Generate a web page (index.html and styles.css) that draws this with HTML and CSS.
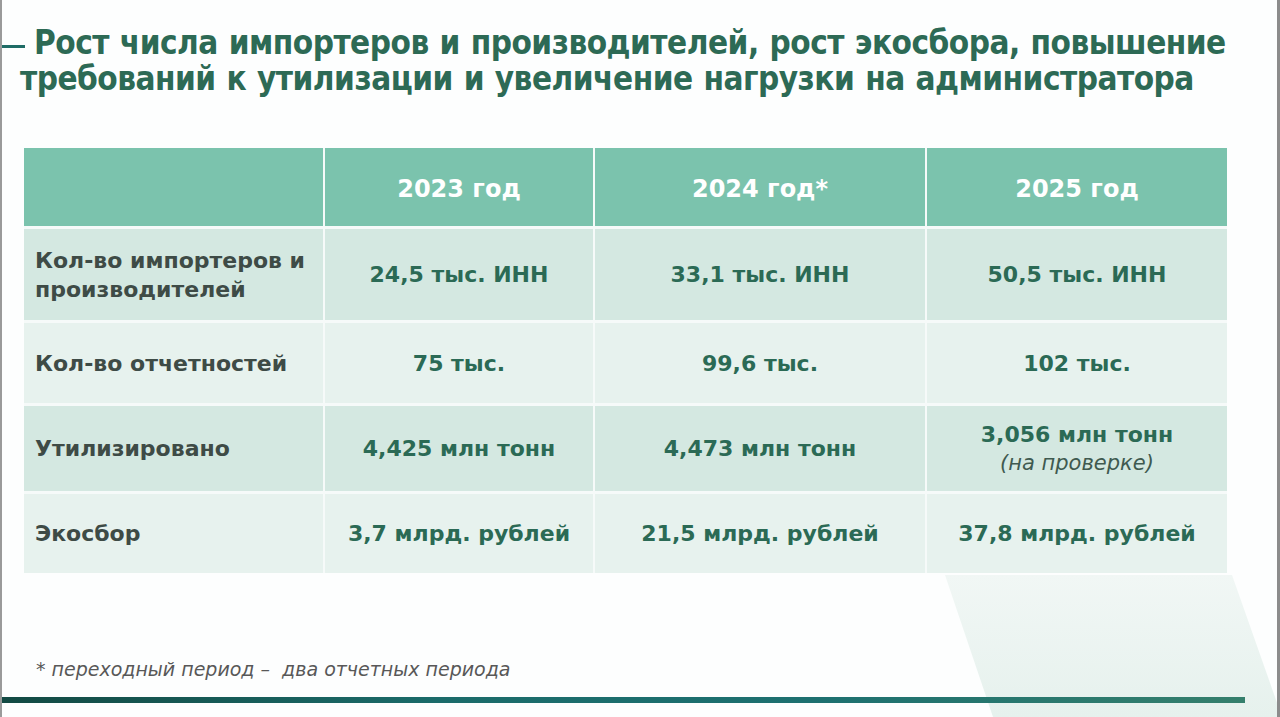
FILE: index.html
```html
<!DOCTYPE html>
<html lang="ru">
<head>
<meta charset="utf-8">
<title>Рост числа импортеров</title>
<link rel="stylesheet" href="styles.css">
</head>
<body>
<div class="slide">
  <svg class="deco" width="340" height="142" viewBox="0 0 340 142" aria-hidden="true">
    <defs>
      <linearGradient id="dg" x1="0" y1="0" x2="0" y2="1">
        <stop offset="0" stop-color="#f1f7f5"/>
        <stop offset="1" stop-color="#e6f1ed"/>
      </linearGradient>
    </defs>
    <polygon points="0,0 287,0 337,142 48,142" fill="url(#dg)"/>
  </svg>
  <h1 class="title">Рост числа импортеров и производителей, рост экосбора, повышение требований к утилизации и увеличение нагрузки на администратора</h1>
  <div class="table">
    <div class="cell head"></div>
    <div class="cell head">2023 год</div>
    <div class="cell head">2024 год*</div>
    <div class="cell head">2025 год</div>

    <div class="cell label odd">Кол-во импортеров и производителей</div>
    <div class="cell val odd">24,5 тыс. ИНН</div>
    <div class="cell val odd">33,1 тыс. ИНН</div>
    <div class="cell val odd">50,5 тыс. ИНН</div>

    <div class="cell label even">Кол-во отчетностей</div>
    <div class="cell val even">75 тыс.</div>
    <div class="cell val even">99,6 тыс.</div>
    <div class="cell val even">102 тыс.</div>

    <div class="cell label odd">Утилизировано</div>
    <div class="cell val odd">4,425 млн тонн</div>
    <div class="cell val odd">4,473 млн тонн</div>
    <div class="cell val odd">3,056 млн тонн<span class="note">(на проверке)</span></div>

    <div class="cell label even">Экосбор</div>
    <div class="cell val even">3,7 млрд. рублей</div>
    <div class="cell val even">21,5 млрд. рублей</div>
    <div class="cell val even">37,8 млрд. рублей</div>
  </div>
  <p class="footnote">* переходный период –&nbsp; два отчетных периода</p>
  <div class="bar"></div>
</div>
</body>
</html>
```

FILE: styles.css
```css
* { box-sizing: border-box; }

html, body {
  margin: 0;
  padding: 0;
  background: #fdfefe;
}

.slide {
  position: relative;
  width: 1280px;
  height: 717px;
  overflow: hidden;
  background: #fdfefe;
  border-left: 2px solid #9a9a9a;
  border-right: 3px solid #8c8c8c;
  font-family: "DejaVu Sans", "Liberation Sans", sans-serif;
  display: flex;
  flex-direction: column;
}

.deco {
  position: absolute;
  left: 943px;
  top: 575px;
}

.title {
  position: relative;
  margin: 25px 0 0 0;
  padding-left: 18px;
  text-indent: 14px;
  font-family: "DejaVu Sans Condensed", "DejaVu Sans", sans-serif;
  font-stretch: condensed;
  font-size: 33px;
  line-height: 36px;
  font-weight: bold;
  letter-spacing: -0.5px;
  word-spacing: 1px;
  color: #2d6a55;
}

.title::before {
  content: "";
  position: absolute;
  left: -2px;
  top: 20px;
  width: 25px;
  height: 3px;
  background: #1f6c66;
}

.table {
  position: relative;
  margin: 51px 0 0 22px;
  width: 1203px;
  display: grid;
  grid-template-columns: 299px 268px 330px 300px;
  grid-template-rows: 78px 91px 80px 85px 79px;
  column-gap: 2px;
  row-gap: 3px;
  background: #f6faf9;
}

.cell {
  display: flex;
  flex-direction: column;
  justify-content: center;
  align-items: center;
  text-align: center;
  font-weight: bold;
}

.head {
  background: #7bc3ad;
  color: #ffffff;
  font-size: 24px;
  padding-top: 4px;
}

.odd { background: #d4e8e1; }
.even { background: #e7f2ee; }

.label {
  align-items: flex-start;
  text-align: left;
  padding-left: 11px;
  color: #3e4b46;
  font-size: 22px;
  line-height: 29px;
}

.val {
  color: #2b6a55;
  font-size: 22px;
  line-height: 29px;
}

.note {
  font-weight: normal;
  font-style: italic;
  color: #3f5a50;
  font-size: 21px;
}

.footnote {
  position: relative;
  margin: 84px 0 0 34px;
  font-size: 19px;
  line-height: 24px;
  font-style: italic;
  color: #585858;
}

.bar {
  position: relative;
  margin-top: 16px;
  width: 1243px;
  height: 6px;
  background: linear-gradient(90deg, #134a43 0%, #1b6b6a 35%, #1d7070 65%, #357f6c 100%);
}
```
